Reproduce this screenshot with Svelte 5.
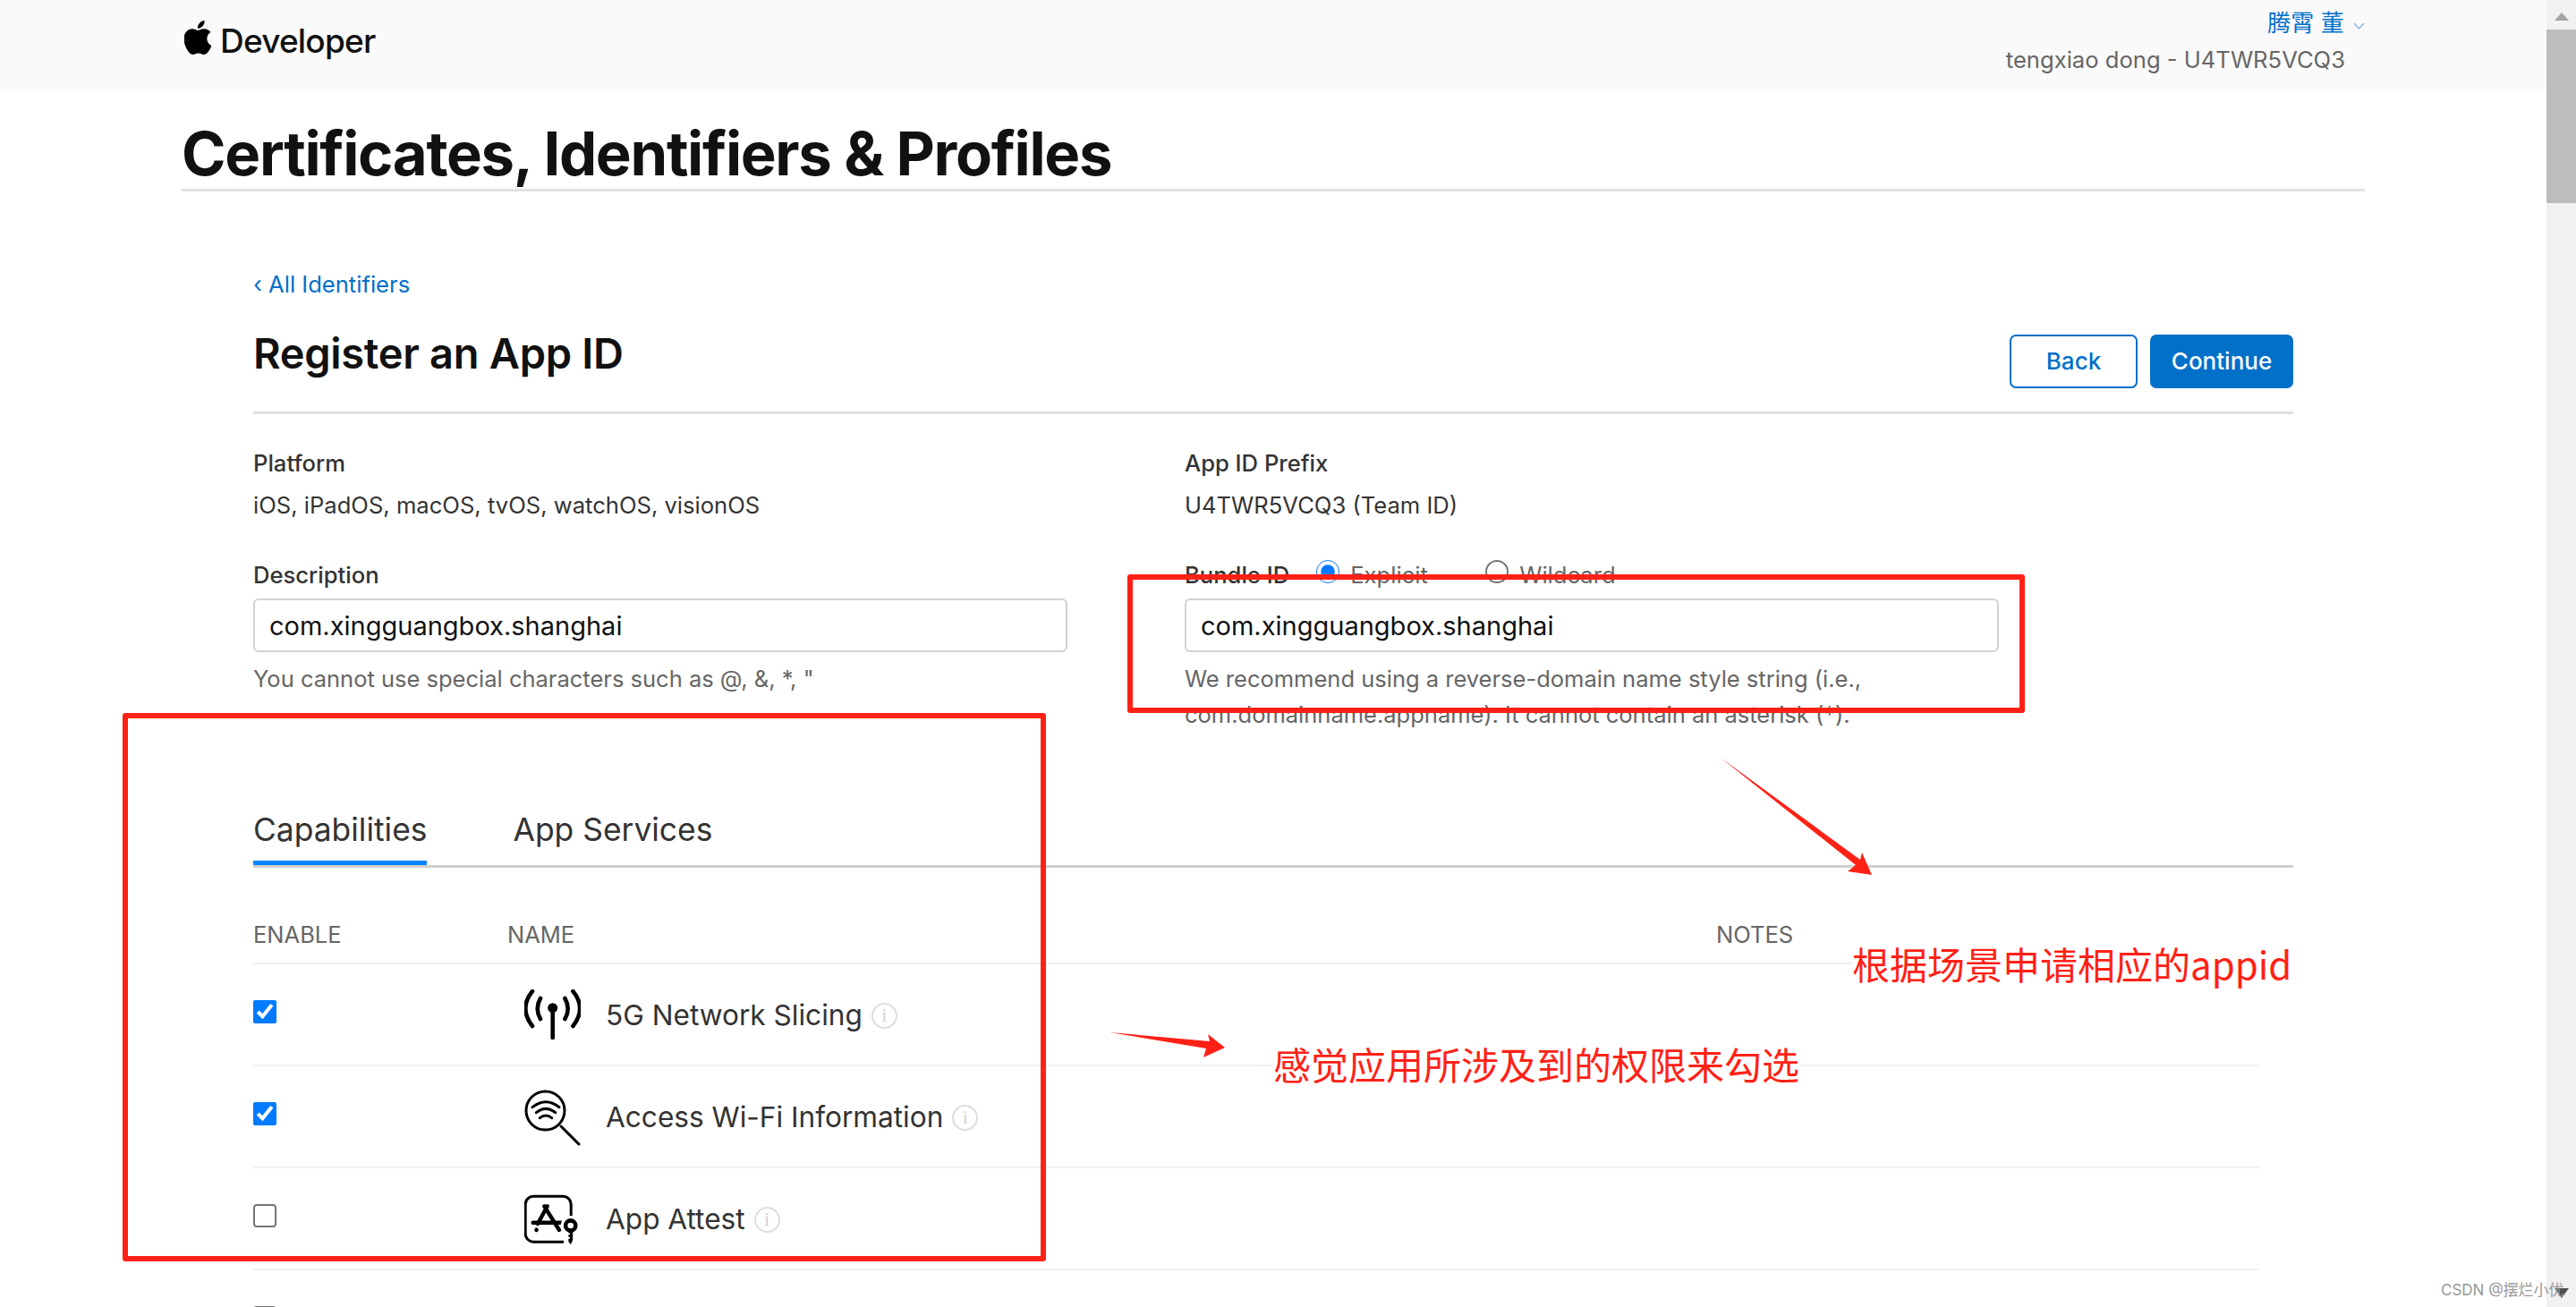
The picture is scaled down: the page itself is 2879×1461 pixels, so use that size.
<script>
  const capabilities = [
    { name: "5G Network Slicing", checked: true, icon: "antenna" },
    { name: "Access Wi-Fi Information", checked: true, icon: "wifi" },
    { name: "App Attest", checked: false, icon: "attest" },
    // next row only just enters the bottom of the window
    { name: "", checked: false, icon: null },
  ];
</script>

<div class="page">
  <div class="main">
    <header class="topbar">
      <div class="brand">
        <svg class="apple" viewBox="3 0 18 24" aria-hidden="true">
          <path d="M12.152 6.896c-.948 0-2.415-1.078-3.96-1.04-2.04.027-3.91 1.183-4.961 3.014-2.117 3.675-.546 9.103 1.519 12.09 1.013 1.454 2.208 3.09 3.792 3.039 1.52-.065 2.09-.987 3.935-.987 1.831 0 2.35.987 3.96.948 1.637-.026 2.676-1.48 3.676-2.948 1.156-1.688 1.636-3.325 1.662-3.415-.039-.013-3.182-1.221-3.22-4.857-.026-3.04 2.48-4.494 2.597-4.559-1.429-2.09-3.623-2.324-4.39-2.376-2-.156-3.675 1.09-4.61 1.09zM15.53 3.83c.843-1.012 1.4-2.427 1.245-3.83-1.207.052-2.662.805-3.532 1.818-.78.896-1.454 2.338-1.273 3.714 1.338.104 2.715-.688 3.559-1.701" />
        </svg>
        <span>Developer</span>
      </div>
      <div class="account">
        <div class="user">
          腾霄 董
          <svg class="chev" viewBox="0 0 13 8" aria-hidden="true"><path d="M1 1l5.5 6L12 1" /></svg>
        </div>
        <div class="team">tengxiao dong - U4TWR5VCQ3</div>
      </div>
    </header>

    <div class="title-wrap">
      <h1>Certificates, Identifiers &amp; Profiles</h1>
    </div>

    <section class="content">
      <a class="back-link" href="#top">‹ All Identifiers</a>

      <div class="form-head">
        <h2>Register an App ID</h2>
        <div class="actions">
          <button class="btn ghost">Back</button>
          <button class="btn solid">Continue</button>
        </div>
      </div>

      <div class="fields">
        <div class="field-info">
          <div class="label">Platform</div>
          <div class="value">iOS, iPadOS, macOS, tvOS, watchOS, visionOS</div>
        </div>
        <div class="field-info">
          <div class="label">App ID Prefix</div>
          <div class="value">U4TWR5VCQ3 (Team ID)</div>
        </div>

        <div class="field">
          <div class="label">Description</div>
          <input type="text" value="com.xingguangbox.shanghai" />
          <p class="hint">You cannot use special characters such as @, &amp;, *, "</p>
        </div>
        <div class="field">
          <div class="label bundle-row">
            <span>Bundle ID</span>
            <label class="radio first"><input type="radio" name="bundle" checked />Explicit</label>
            <label class="radio"><input type="radio" name="bundle" />Wildcard</label>
          </div>
          <input type="text" value="com.xingguangbox.shanghai" />
          <p class="hint">We recommend using a reverse-domain name style string (i.e.,<br />com.domainname.appname). It cannot contain an asterisk (*).</p>
        </div>
      </div>

      <nav class="tabs">
        <span class="tab active">Capabilities</span>
        <span class="tab">App Services</span>
      </nav>

      <div class="cap-table">
        <div class="cap-row cap-head">
          <span>ENABLE</span>
          <span>NAME</span>
          <span class="notes">NOTES</span>
        </div>
        {#each capabilities as cap}
          <div class="cap-row">
            <input type="checkbox" checked={cap.checked} />
            <div class="cap-name">
              <span class="cap-icon">
                {#if cap.icon === "antenna"}
                  <svg viewBox="0 0 63 56" width="63" height="56" aria-hidden="true">
                    <g fill="none" stroke="#000" stroke-width="4.600" stroke-linecap="round">
                      <path d="M9 2Q-6.5 21 9 41M54.4 2Q70 21 54.4 41M18 10Q11.4 21.5 18 33M45.4 10Q52 21.5 45.4 33" />
                      <path d="M31.7 21V54" />
                    </g>
                    <circle cx="31.7" cy="20.7" r="5.500" />
                  </svg>
                {:else if cap.icon === "wifi"}
                  <svg class="shift-wifi" viewBox="0 0 63 65" width="63" height="65" aria-hidden="true">
                    <g fill="none" stroke="#000" stroke-width="3" stroke-linecap="round">
                      <circle cx="23.5" cy="25.5" r="21.5" />
                      <path d="M41 43L61 63" />
                      <path d="M9 21.7Q24 9.7 39 21.7M13.3 27.7Q24 19 34.7 27.7M17.3 33.7Q24 28.3 30.7 33.7" />
                    </g>
                  </svg>
                {:else if cap.icon === "attest"}
                  <svg class="shift-attest" viewBox="0 0 63 60" width="63" height="60" aria-hidden="true">
                    <rect x="1.2" y="2.2" width="51" height="51" rx="9" fill="none" stroke="#000" stroke-width="3" />
                    <g fill="none" stroke="#000" stroke-linecap="round">
                      <path d="M25.7 13.3L15 33M13.5 40l.2-.4M22.3 13.3L39 40M9.7 31.7H42.3" stroke-width="4.400" />
                    </g>
                    <circle cx="51.7" cy="35" r="11" fill="#fff" />
                    <rect x="44" y="40" width="16" height="17" fill="#fff" />
                    <circle cx="51.7" cy="35" r="5.6" fill="none" stroke="#000" stroke-width="4.600" />
                    <path d="M49.800 39h4v12l-2 4.500-2-2.500v-3h1.600v-2.500h-1.600v-2h1.600v-2.500h-1.600z" stroke="#000" stroke-width=".8" />
                  </svg>
                {/if}
              </span>
              {#if cap.name}
                <span class="cap-label">{cap.name}</span>
                <span class="info">i</span>
              {/if}
            </div>
          </div>
        {/each}
      </div>
    </section>
  </div>

  <aside class="scrollbar">
    <span class="arrow-up"></span>
    <span class="thumb"></span>
    <span class="arrow-down"></span>
  </aside>

  <!-- red markup drawn on top of the capture -->
  <div class="mark box-bundle"></div>
  <div class="mark box-caps"></div>
  <svg class="arrows" viewBox="0 0 2879 1461" aria-hidden="true">
    <polygon points="1923,847 2079,961 2081,953 2092,978 2065,974 2074,967" />
    <polygon points="1240,1154 1352,1164 1350,1156 1369,1171 1345,1182 1348,1172" />
  </svg>
  <div class="note note-appid">根据场景申请相应的appid</div>
  <div class="note note-perm">感觉应用所涉及到的权限来勾选</div>
  <div class="watermark">CSDN @摆烂小优</div>
</div>

<style>
  :global(body) {
    margin: 0;
    background: #fff;
  }
  .page {
    position: relative;
    display: flex;
    width: 2879px;
    height: 1461px;
    overflow: hidden;
    font-family: Inter, "Noto Sans CJK SC", sans-serif;
    color: #333;
  }
  .main {
    flex: 1;
    min-width: 0;
  }

  /* top bar */
  .topbar {
    display: flex;
    justify-content: space-between;
    height: 100px;
    padding: 0 203px;
    background: #fafafa;
  }
  .brand {
    display: flex;
    align-items: center;
    gap: 10px;
    height: 90px;
    padding-left: 3px;
    font-size: 37px;
    font-weight: 500;
    letter-spacing: -0.8px;
    color: #111;
  }
  .apple {
    width: 30px;
    height: 38px;
    margin-top: -6px;
  }
  .account {
    text-align: right;
  }
  .user {
    height: 52px;
    line-height: 52px;
    font-size: 26px;
    color: #0070c9;
  }
  .chev {
    width: 13px;
    height: 8px;
    margin-left: 3px;
    vertical-align: 2px;
    fill: none;
    stroke: #8ab8e6;
    stroke-width: 1.5;
  }
  .team {
    padding-right: 22px;
    line-height: 30px;
    font-size: 25.6px;
    color: #666;
  }

  /* page title */
  .title-wrap {
    height: 111px;
    margin: 0 203px;
    border-bottom: 3px solid #e2e2e2;
  }
  h1 {
    margin: 0;
    padding-top: 30px;
    line-height: 84px;
    font-size: 67px;
    font-weight: 700;
    letter-spacing: -1.3px;
    color: #111;
  }

  .content {
    padding: 0 283px;
  }
  .back-link {
    display: block;
    margin-top: 86px;
    line-height: 36px;
    font-size: 25.6px;
    color: #0070c9;
    text-decoration: none;
  }
  .form-head {
    display: flex;
    justify-content: space-between;
    height: 124px;
    border-bottom: 3px solid #e0e0e0;
    box-sizing: content-box;
  }
  h2 {
    margin: 0;
    padding-top: 29px;
    line-height: 60px;
    font-size: 47px;
    font-weight: 600;
    letter-spacing: -0.3px;
    color: #111;
  }
  .actions {
    display: flex;
    gap: 14px;
    padding-top: 38px;
  }
  .btn {
    height: 60px;
    padding: 0 0 2px;
    border-radius: 7px;
    font-family: inherit;
    font-size: 26px;
    font-weight: 500;
  }
  .ghost {
    width: 143px;
    border: 2px solid #0070c9;
    background: #fff;
    color: #0070c9;
  }
  .solid {
    width: 160px;
    border: 2px solid #0070c9;
    background: #0070c9;
    color: #fff;
  }

  /* form */
  .fields {
    display: grid;
    grid-template-columns: 910px 910px;
    column-gap: 131px;
    padding-top: 37px;
  }
  .field-info {
    height: 125px;
  }
  .label {
    line-height: 36px;
    font-size: 25.6px;
    font-weight: 500;
    color: #333;
  }
  .value {
    margin-top: 11px;
    line-height: 36px;
    font-size: 25.6px;
    color: #333;
  }
  .field input[type="text"] {
    display: block;
    box-sizing: border-box;
    width: 100%;
    height: 60px;
    margin-top: 8px;
    padding: 0 16px;
    border: 2px solid #d2d2d2;
    border-radius: 6px;
    outline: none;
    font-family: inherit;
    font-size: 29px;
    color: #111;
  }
  .hint {
    margin: 10px 0 0;
    line-height: 40px;
    font-size: 25.5px;
    color: #666;
  }
  .bundle-row {
    display: flex;
    align-items: center;
  }
  .radio {
    display: flex;
    align-items: center;
    gap: 12px;
    font-weight: 400;
    color: #666;
  }
  .radio input {
    width: 26px;
    height: 26px;
    margin: -8px 0 0;
    accent-color: #0a7aff;
  }
  .radio input:not(:checked) {
    appearance: none;
    box-sizing: border-box;
    border: 2px solid #767676;
    border-radius: 50%;
    background: #fff;
  }
  .radio.first {
    width: 189px;
    margin-left: 30px;
  }

  /* tabs */
  .tabs {
    display: flex;
    gap: 96px;
    height: 147px;
    margin-top: 1px;
    border-bottom: 3px solid #cfcfcf;
    box-sizing: content-box;
  }
  .tab {
    box-sizing: border-box;
    height: 100%;
    padding-top: 85px;
    line-height: 46px;
    font-size: 35.4px;
    color: #333;
  }
  .tab.active {
    margin-bottom: -1px;
    border-bottom: 5px solid #0a84ff;
  }

  /* capability list */
  .cap-table {
    width: 2242px;
  }
  .cap-row {
    display: grid;
    grid-template-columns: 284px 1fr;
    align-items: center;
    height: 112px;
    border-bottom: 2px solid #f1f1f1;
  }
  .cap-row input {
    width: 26px;
    height: 26px;
    margin: -6px 0 0;
    accent-color: #007aff;
  }
  .cap-row input:not(:checked) {
    appearance: none;
    box-sizing: border-box;
    border: 2px solid #767676;
    border-radius: 4px;
    background: #fff;
  }
  .cap-head {
    grid-template-columns: 284px 1351px 1fr;
    height: 106px;
    padding-top: 0;
    font-size: 25.5px;
    color: #666;
  }
  .cap-head span {
    padding-top: 42px;
  }
  .cap-name {
    display: flex;
    align-items: center;
    font-size: 31.6px;
    color: #333;
  }
  .cap-icon {
    display: flex;
    flex: none;
    width: 110px;
    padding-left: 19px;
    box-sizing: border-box;
  }
  .shift-wifi {
    margin-top: 0;
  }
  .shift-attest {
    margin-top: 6px;
  }
  .cap-label {
    padding-top: 0;
  }
  .info {
    display: flex;
    align-items: center;
    justify-content: center;
    box-sizing: border-box;
    width: 29px;
    height: 29px;
    margin: 2px 0 0 10px;
    border: 2px solid #dedede;
    border-radius: 50%;
    font-family: "Liberation Serif", serif;
    font-size: 20px;
    color: #cfcfcf;
  }

  /* browser scrollbar */
  .scrollbar {
    position: relative;
    flex: none;
    width: 33px;
    background: #f1f1f1;
  }
  .arrow-up {
    display: block;
    width: 0;
    margin: 14px auto 0;
    border-right: 8px solid transparent;
    border-bottom: 9px solid #a3a3a3;
    border-left: 8px solid transparent;
  }
  .thumb {
    display: block;
    height: 194px;
    margin-top: 10px;
    background: #bdbdbd;
  }
  .arrow-down {
    position: absolute;
    bottom: 10px;
    left: 9px;
    width: 0;
    border-top: 11px solid #505050;
    border-right: 8px solid transparent;
    border-left: 8px solid transparent;
  }

  /* annotations */
  .mark {
    position: absolute;
    box-sizing: border-box;
    border: 6px solid #ff2116;
    border-radius: 3px;
  }
  .box-bundle {
    left: 1260px;
    top: 642px;
    width: 1003px;
    height: 155px;
  }
  .box-caps {
    left: 137px;
    top: 797px;
    width: 1032px;
    height: 613px;
  }
  .arrows {
    position: absolute;
    left: 0;
    top: 0;
    width: 2879px;
    height: 1461px;
    fill: #ff2116;
  }
  .note {
    position: absolute;
    height: 44px;
    background: #fff;
    line-height: 44px;
    font-family: "Noto Sans CJK SC", sans-serif;
    font-size: 42px;
    font-weight: 400;
    white-space: nowrap;
    color: #ff2116;
  }
  .note-appid {
    left: 2070px;
    top: 1055px;
    width: 493px;
  }
  .note-perm {
    left: 1423px;
    top: 1167px;
  }
  .watermark {
    position: absolute;
    left: 2728px;
    top: 1431px;
    line-height: 22px;
    font-size: 17px;
    white-space: nowrap;
    color: #999;
  }
</style>
